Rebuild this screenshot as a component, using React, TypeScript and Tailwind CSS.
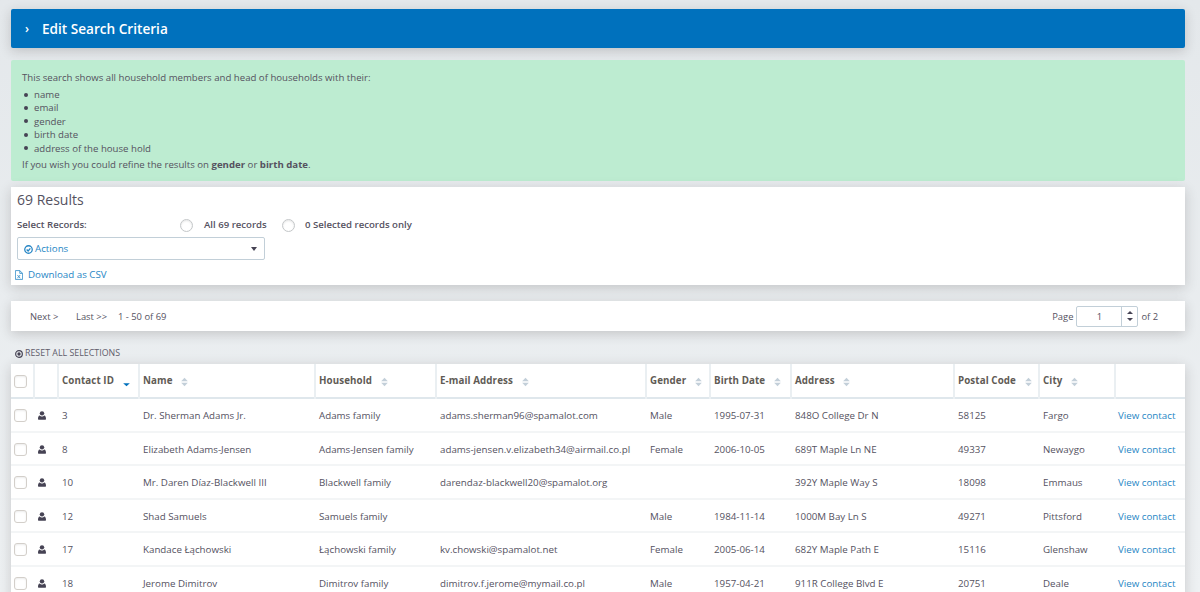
const rows = [
  { id: "3", name: "Dr. Sherman Adams Jr.", household: "Adams family", email: "adams.sherman96@spamalot.com", gender: "Male", birth: "1995-07-31", address: "848O College Dr N", postal: "58125", city: "Fargo" },
  { id: "8", name: "Elizabeth Adams-Jensen", household: "Adams-Jensen family", email: "adams-jensen.v.elizabeth34@airmail.co.pl", gender: "Female", birth: "2006-10-05", address: "689T Maple Ln NE", postal: "49337", city: "Newaygo" },
  { id: "10", name: "Mr. Daren Díaz-Blackwell III", household: "Blackwell family", email: "darendaz-blackwell20@spamalot.org", gender: "", birth: "", address: "392Y Maple Way S", postal: "18098", city: "Emmaus" },
  { id: "12", name: "Shad Samuels", household: "Samuels family", email: "", gender: "Male", birth: "1984-11-14", address: "1000M Bay Ln S", postal: "49271", city: "Pittsford" },
  { id: "17", name: "Kandace Łąchowski", household: "Łąchowski family", email: "kv.chowski@spamalot.net", gender: "Female", birth: "2005-06-14", address: "682Y Maple Path E", postal: "15116", city: "Glenshaw" },
  { id: "18", name: "Jerome Dimitrov", household: "Dimitrov family", email: "dimitrov.f.jerome@mymail.co.pl", gender: "Male", birth: "1957-04-21", address: "911R College Blvd E", postal: "20751", city: "Deale" },
];

const columns = [
  { label: "Name", width: "w-[176px]" },
  { label: "Household", width: "w-[121px]" },
  { label: "E-mail Address", width: "w-[210px]" },
  { label: "Gender", width: "w-[64px]" },
  { label: "Birth Date", width: "w-[81px]" },
  { label: "Address", width: "w-[163px]" },
  { label: "Postal Code", width: "w-[85px]" },
  { label: "City", width: "w-[76px]" },
];

const bullets = ["name", "email", "gender", "birth date", "address of the house hold"];

const SortIcon = ({ active }: { active?: boolean }) => (
  <svg viewBox="0 0 8 12" className="ml-[6px] inline-block h-[10px] w-[7px] align-[-3px]">
    {active ? (
      <path d="M0 7.500h8L4 11z" fill="#0071bd" />
    ) : (
      <>
        <path d="M0 5h8L4 1z" fill="#c3cfd9" />
        <path d="M0 7h8l-4 4z" fill="#c3cfd9" />
      </>
    )}
  </svg>
);

const PersonIcon = () => (
  <svg viewBox="0 0 12 13" className="ml-[4px] h-[9px] w-[8px]" fill="#464354">
    <circle cx="6" cy="3.300" r="3.300" />
    <path d="M1 13c-.7 0-1-.5-1-1.200C0 9.500.6 6.500 2.800 6.500c.7.800 1.900 1.500 3.200 1.500s2.500-.7 3.200-1.500C11.400 6.500 12 9.500 12 11.800c0 .7-.3 1.200-1 1.200z" />
  </svg>
);

const Checkbox = () => (
  <span className="block h-[13px] w-[13px] rounded-[3px] border border-[#d3cfca] bg-white shadow-[inset_0_1px_2px_rgba(0,0,0,0.08)]"></span>
);

const Radio = () => (
  <span className="block h-[13px] w-[13px] rounded-full border border-[#c4c7c9] bg-white shadow-[inset_0_1px_2px_rgba(0,0,0,0.1)]"></span>
);

export default function App() {
  return (
    <div className="h-[592px] overflow-hidden bg-gradient-to-b from-[#e4e8eb] to-[#eef1f3] pl-[11px] pr-[15px] pt-[9px] font-['Open_Sans',sans-serif] text-[9.750px] text-[#55525f]">
      <div className="flex h-[39px] items-center rounded-[2px] bg-[#0071bd] pl-[14px] pt-[1px] text-[13.600px] font-semibold text-white shadow-[0_3px_12px_rgba(48,40,40,0.2)]">
        <span className="mr-[13px] text-[12px]">›</span>
        Edit Search Criteria
      </div>

      <div className="mt-[12px] h-[121px] rounded-[2px] bg-[#bdecd1] px-[11px] pt-[11px] text-[9.650px] leading-[13.400px]">
        <p>This search shows all household members and head of households with their:</p>
        <ul className="mt-[3.500px] pl-[2px]">
          {bullets.map((item) => (
            <li key={item} className="flex items-center gap-[6px]">
              <span className="h-[4px] w-[4px] rounded-full bg-[#464354]"></span>
              {item}
            </li>
          ))}
        </ul>
        <p className="mt-[3.500px]">If you wish you could refine the results on <b>gender</b> or <b>birth date</b>.</p>
      </div>

      <div className="mt-[6px] h-[98px] bg-white px-[6px] pt-[3px] shadow-[0_3px_12px_rgba(48,40,40,0.2)]">
        <div className="text-[14px] font-medium leading-[19px]">69 Results</div>
        <div className="mt-[9px] flex h-[14px] items-center text-[9.600px] font-semibold">
          <span className="w-[163px]">Select Records:</span>
          <Radio />
          <span className="ml-[11px] w-[78px]">All 69 records</span>
          <Radio />
          <span className="ml-[10px]">0 Selected records only</span>
        </div>
        <div className="mt-[5px] flex h-[23px] w-[248px] items-center justify-between rounded-[2px] border border-[#c2cfd8] pl-[6px] pr-[7px] text-[#2786c5]">
          <span className="flex items-center gap-[2px] pt-[1px]">
            <svg viewBox="0 0 12 12" className="h-[9px] w-[9px]" fill="none" stroke="#2786c5" strokeWidth="1.700">
              <circle cx="6" cy="6" r="5" />
              <path d="M3.500 6l2 2 3-3.500" />
            </svg>
            Actions
          </span>
          <span className="h-0 w-0 border-x-[3.500px] border-t-[4px] border-x-transparent border-t-[#464354]"></span>
        </div>
        <div className="mt-[8px] flex items-center text-[#2786c5]">
          <svg viewBox="0 0 10 12" className="-ml-[2px] mr-[5px] h-[10px] w-[8px]" fill="none" stroke="#2786c5" strokeWidth="1">
            <path d="M.5.500h5.500l3.500 3.500v7.500H.5zM6 .5V4h3.500" />
            <path d="M3 6l3.500 4M6.500 6L3 10" />
          </svg>
          <span>Download as CSV</span>
        </div>
      </div>

      <div className="mt-[16px] flex h-[30px] items-center justify-between bg-white pl-[19px] pr-[27px] text-[9.400px] shadow-[0_3px_12px_rgba(48,40,40,0.2)]">
        <div className="flex items-center pt-[2px]">
          <span className="w-[46px]">Next &gt;</span>
          <span className="w-[42px]">Last &gt;&gt;</span>
          <span>1 - 50 of 69</span>
        </div>
        <div className="flex items-center">
          <span className="mr-[3px] pt-[2px]">Page</span>
          <div className="flex h-[21px] w-[62px] items-center rounded-[2px] border border-[#c2cfd8]">
            <span className="flex-1 pt-[2px] text-center">1</span>
            <span className="flex h-full w-[16px] flex-col items-center justify-center gap-[4px] border-l border-[#c2cfd8]">
              <span className="h-0 w-0 border-x-[3px] border-b-[3px] border-x-transparent border-b-[#464354]"></span>
              <span className="h-0 w-0 border-x-[3px] border-t-[3px] border-x-transparent border-t-[#464354]"></span>
            </span>
          </div>
          <span className="ml-[3px] pt-[2px]">of 2</span>
        </div>
      </div>

      <div className="mt-[15px] flex h-[14px] items-center gap-[2px] pl-[4px] pt-[2px] text-[8.850px] text-[#5f5c6b]">
        <svg viewBox="0 0 12 12" className="h-[8px] w-[8px]">
          <circle cx="6" cy="6" r="5" fill="none" stroke="#464354" strokeWidth="1.800" />
          <circle cx="6" cy="6" r="2.500" fill="#464354" />
        </svg>
        RESET ALL SELECTIONS
      </div>

      <table className="mt-[4px] w-[1174px] table-fixed border-collapse bg-white shadow-[0_3px_12px_rgba(48,40,40,0.2)]">
        <thead>
          <tr className="h-[34px] border-b-2 border-[#dfe7ec] text-left font-bold text-[#5f5b55]">
            <th className="w-[23px] border-r-2 border-[#eaeff2] pl-[3px] pt-[2px]"><Checkbox /></th>
            <th className="w-[24px] border-r-2 border-[#eaeff2]"></th>
            <th className="w-[81px] border-r-2 border-[#eaeff2] pl-[3px] pt-[2px] tracking-[0.1px]">Contact ID <SortIcon active /></th>
            {columns.map((col) => (
              <th key={col.label} className={`${col.width} border-r-2 border-[#eaeff2] pl-[3px] pt-[2px] tracking-[0.1px]`}>
                {col.label} <SortIcon />
              </th>
            ))}
            <th></th>
          </tr>
        </thead>
        <tbody>
          {rows.map((row) => (
            <tr key={row.id} className="h-[33.500px] border-b-2 border-[#f3f5f6]">
              <td className="pl-[3px] pt-[2px]"><Checkbox /></td>
              <td className="pt-[2px]"><PersonIcon /></td>
              <td className="pl-[4px] pt-[4px]">{row.id}</td>
              <td className="pl-[4px] pt-[4px]">{row.name}</td>
              <td className="pl-[4px] pt-[4px]">{row.household}</td>
              <td className="pl-[4px] pt-[4px]">{row.email}</td>
              <td className="pl-[4px] pt-[4px]">{row.gender}</td>
              <td className="pl-[4px] pt-[4px]">{row.birth}</td>
              <td className="pl-[4px] pt-[4px]">{row.address}</td>
              <td className="pl-[4px] pt-[4px]">{row.postal}</td>
              <td className="pl-[4px] pt-[4px]">{row.city}</td>
              <td className="pl-[3px] pt-[4px] text-[#2786c5]">View contact</td>
            </tr>
          ))}
        </tbody>
      </table>
    </div>
  );
}
